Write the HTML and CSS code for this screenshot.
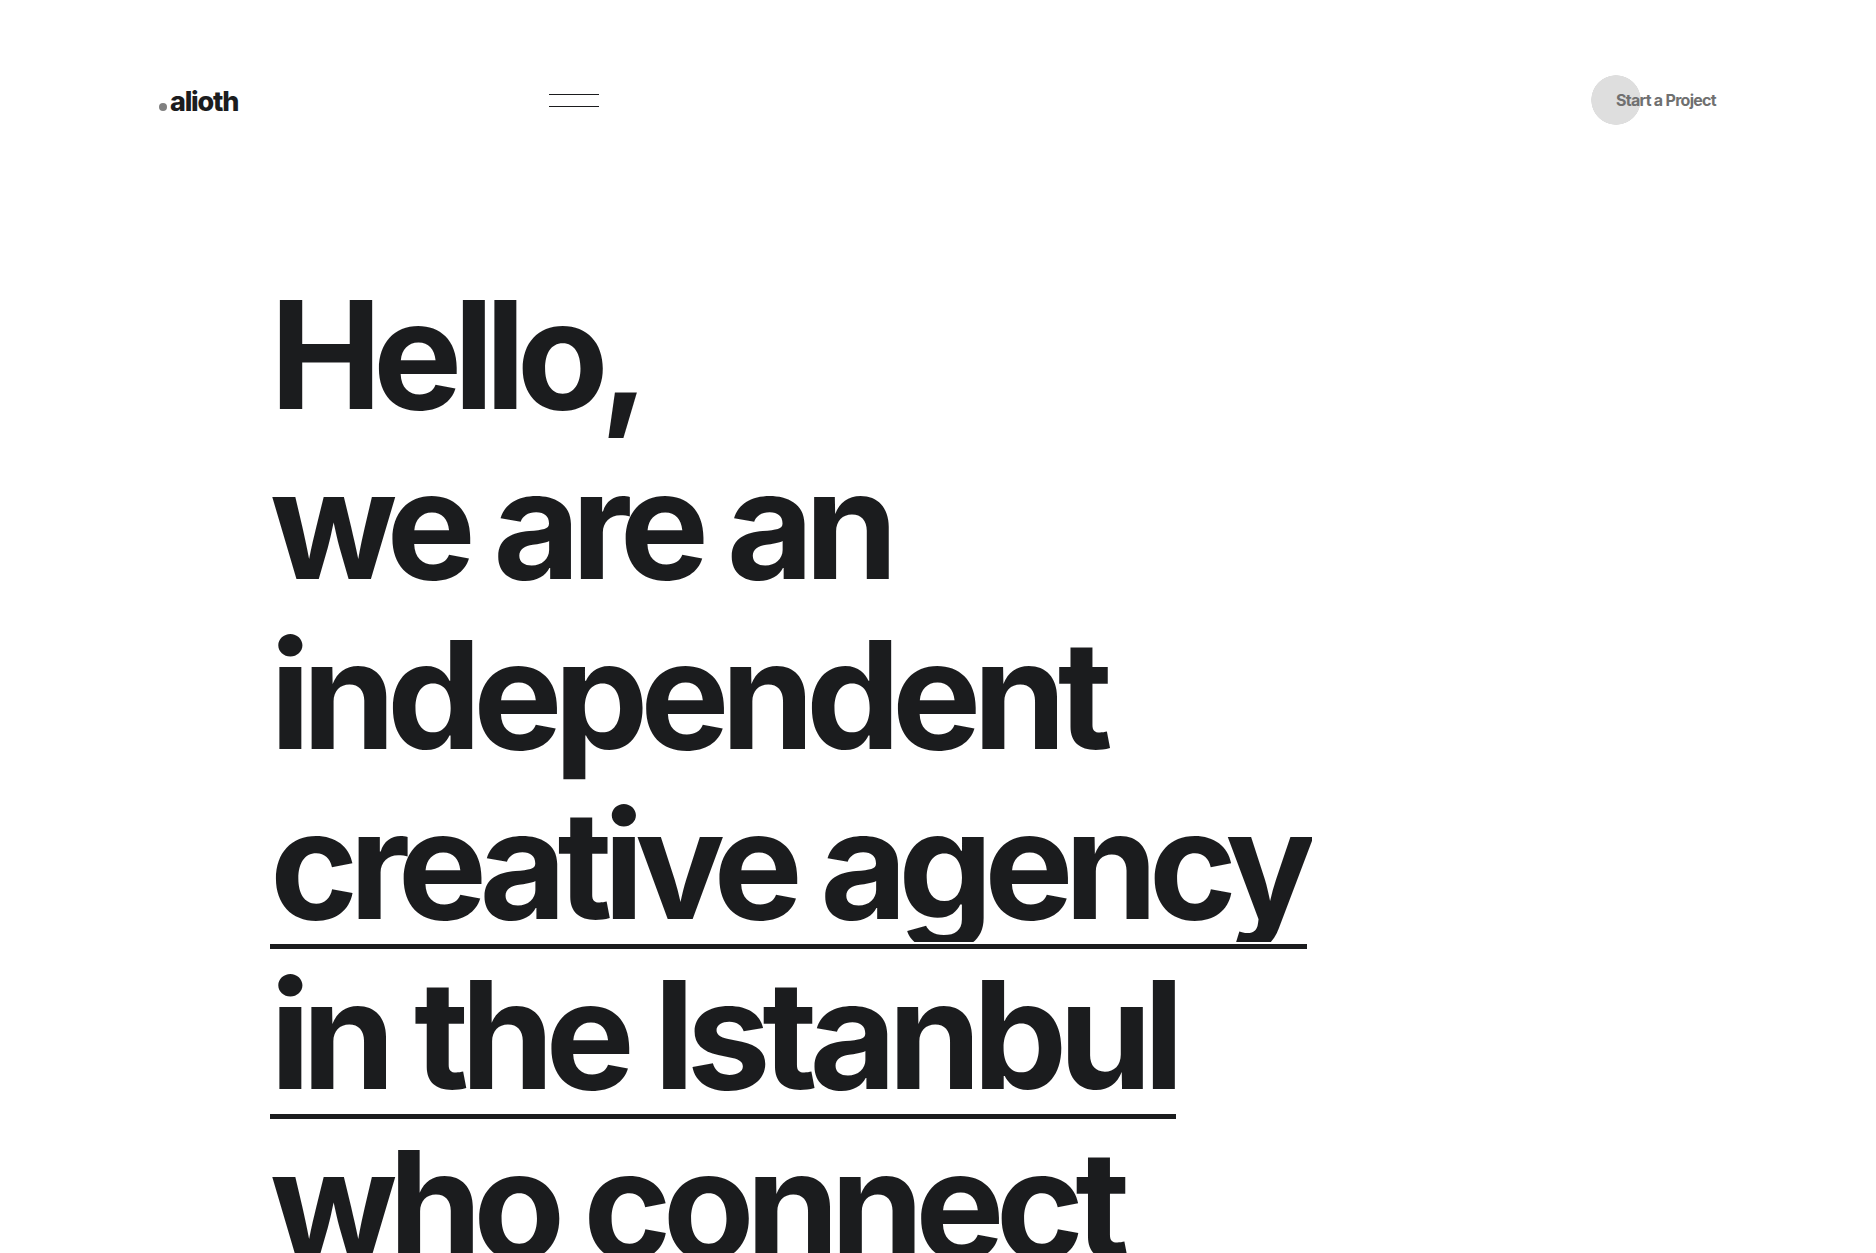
FILE: index.html
```html
<!DOCTYPE html>
<html lang="en">
<head>
  <meta charset="UTF-8">
  <title>alioth</title>
  <link rel="stylesheet" href="styles.css">
</head>
<body>

  <header class="site-header">
    <a class="logo" href="#"><span class="logo-dot"></span>alioth</a>
    <button class="menu-toggle" type="button" aria-label="Menu"></button>
    <a class="cta" href="#">Start a Project</a>
  </header>

  <h1 class="hero">
    <span class="hero-line">Hello,</span>
    <span class="hero-line">we are an</span>
    <span class="hero-line hero-line-wide">independent</span>
    <span class="hero-line"><span class="hero-link"><span class="hero-clip">creative agency</span></span></span>
    <span class="hero-line hero-line-mid"><span class="hero-link"><span class="hero-clip">in the Istanbul</span></span></span>
    <span class="hero-line hero-line-close">who connect</span>
  </h1>

</body>
</html>
```

FILE: styles.css
```css
html, body {
  height: 100%;
  overflow: hidden;
}

body {
  margin: 0;
  background-color: #fff;
  color: #1b1c1e;
  font-family: Inter, "Liberation Sans", sans-serif;
  font-optical-sizing: none;
  font-variation-settings: "opsz" 14;
}

a {
  color: inherit;
  text-decoration: none;
}

.site-header {
  display: flex;
  align-items: center;
  height: 50px;
  padding: 75px 0 0 159px;
}

.logo {
  display: flex;
  align-items: baseline;
  gap: 3px;
  width: 390px;
  padding-top: 2px;
  font-size: 27px;
  font-weight: 800;
  letter-spacing: -0.045em;
}

.logo-dot {
  width: 8px;
  height: 8px;
  border-radius: 50%;
  background-color: #808080;
}

.menu-toggle {
  width: 50px;
  height: 13px;
  margin-top: 1px;
  padding: 0;
  border: 0;
  border-top: 1px solid #1b1c1e;
  border-bottom: 1px solid #1b1c1e;
  background: none;
}

.cta {
  display: flex;
  align-items: center;
  height: 50px;
  margin-left: 992px;
  padding-left: 25px;
  background: radial-gradient(circle 25px at 25px 25px, #dedede 24.5px, transparent 25px);
  color: #707070;
  font-size: 16px;
  font-weight: 700;
  letter-spacing: -0.045em;
  white-space: nowrap;
}

.hero {
  margin: 145px 0 0 270px;
  font-size: 150px;
  font-weight: 700;
  line-height: 170px;
  letter-spacing: -0.06em;
}

.hero-line {
  display: block;
  height: 170px;
  white-space: nowrap;
}

.hero-line-wide {
  letter-spacing: -0.0565em;
}

.hero-line-mid {
  letter-spacing: -0.057em;
}

.hero-line-close {
  letter-spacing: -0.0585em;
}

.hero-link {
  display: inline-block;
  vertical-align: top;
  position: relative;
}

.hero-link::after {
  content: "";
  position: absolute;
  left: 0;
  right: 0;
  top: 164px;
  height: 5px;
  background-color: #1b1c1e;
}

.hero-clip {
  display: block;
  height: 162px;
  margin-right: -5px;
  padding-right: 5px;
  overflow: hidden;
}
```
